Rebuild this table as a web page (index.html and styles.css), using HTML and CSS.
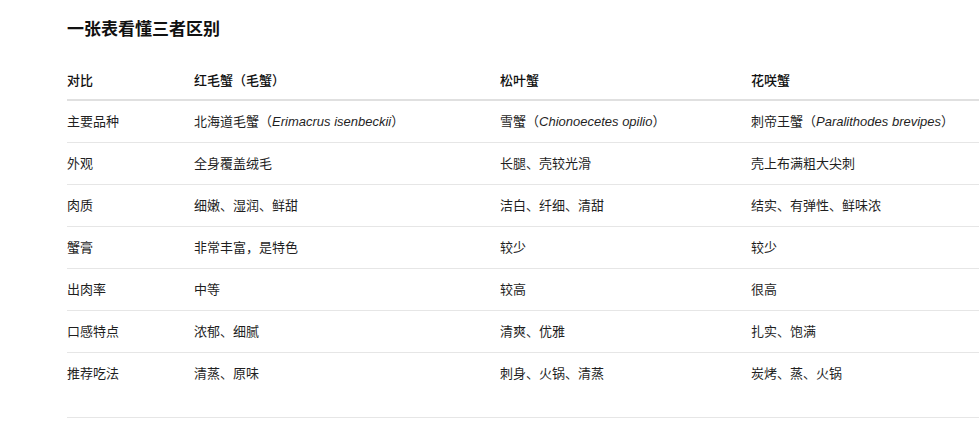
FILE: index.html
```html
<!DOCTYPE html>
<html lang="zh-CN">
<head>
<meta charset="utf-8">
<title>一张表看懂三者区别</title>
<link rel="stylesheet" href="styles.css">
</head>
<body>
<div class="page">
  <h2 class="title">一张表看懂三者区别</h2>
  <div class="table-wrap">
    <table class="compare">
      <colgroup>
        <col class="c1"><col class="c2"><col class="c3"><col class="c4">
      </colgroup>
      <thead>
        <tr><th>对比</th><th>红毛蟹（毛蟹）</th><th>松叶蟹</th><th>花咲蟹</th></tr>
      </thead>
      <tbody>
        <tr><td>主要品种</td><td>北海道毛蟹（<em>Erimacrus isenbeckii</em>）</td><td>雪蟹（<em>Chionoecetes opilio</em>）</td><td>刺帝王蟹（<em>Paralithodes brevipes</em>）</td></tr>
        <tr><td>外观</td><td>全身覆盖绒毛</td><td>长腿、壳较光滑</td><td>壳上布满粗大尖刺</td></tr>
        <tr><td>肉质</td><td>细嫩、湿润、鲜甜</td><td>洁白、纤细、清甜</td><td>结实、有弹性、鲜味浓</td></tr>
        <tr><td>蟹膏</td><td>非常丰富，是特色</td><td>较少</td><td>较少</td></tr>
        <tr><td>出肉率</td><td>中等</td><td>较高</td><td>很高</td></tr>
        <tr><td>口感特点</td><td>浓郁、细腻</td><td>清爽、优雅</td><td>扎实、饱满</td></tr>
        <tr><td>推荐吃法</td><td>清蒸、原味</td><td>刺身、火锅、清蒸</td><td>炭烤、蒸、火锅</td></tr>
      </tbody>
    </table>
  </div>
</div>
</body>
</html>
```
FILE: styles.css
```css
html, body {
  margin: 0;
  padding: 0;
  background: #ffffff;
}
body {
  font-family: "Liberation Sans", "Noto Sans CJK SC", sans-serif;
  color: #1f1f1f;
  overflow: hidden;
}
.page {
  padding: 18px 0 0 67px;
}
.title {
  margin: 0;
  font-size: 17px;
  line-height: 24px;
  font-weight: 700;
  color: #111;
}
.table-wrap {
  margin-top: 19px;
  overflow: hidden;
  padding-bottom: 23px;
  border-bottom: 1px solid #e6e6e6;
}
.compare {
  border-collapse: collapse;
  table-layout: fixed;
  width: 1000px;
  font-size: 13px;
  line-height: 20px;
}
.c1 { width: 127px; }
.c2 { width: 306px; }
.c3 { width: 251px; }
.c4 { width: 316px; }
.compare th {
  text-align: left;
  font-weight: 500;
  padding: 10px 0 8px 0;
  border-bottom: 2px solid #e0e0e0;
  color: #111;
}
.compare td {
  padding: 11px 0 10px 0;
  border-bottom: 1px solid #e6e6e6;
  white-space: nowrap;
}
.compare tbody tr:last-child td {
  border-bottom: none;
}
.compare em {
  font-style: italic;
}
```
